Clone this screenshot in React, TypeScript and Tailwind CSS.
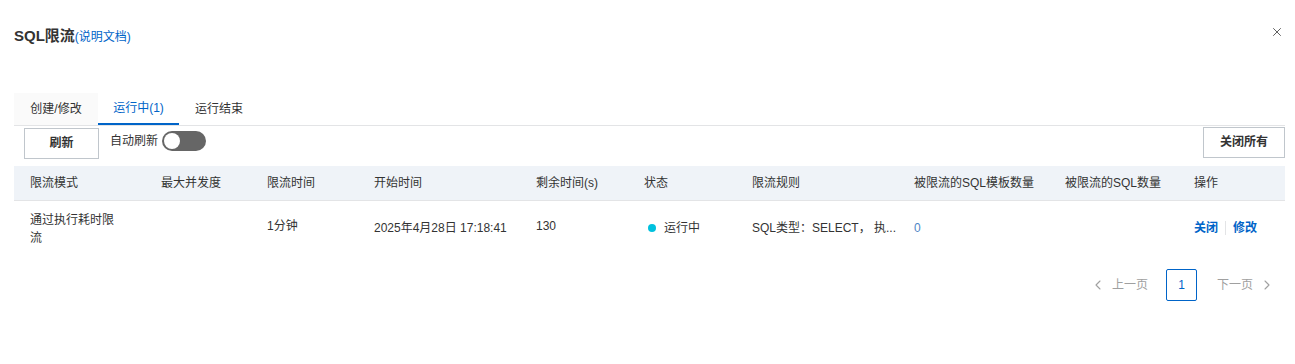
import { X, ChevronLeft, ChevronRight } from "lucide-react";

const cols = "grid grid-cols-[131px_106px_107px_162px_108px_108px_162px_151px_129px_1fr]";

const headers = [
  "限流模式",
  "最大并发度",
  "限流时间",
  "开始时间",
  "剩余时间(s)",
  "状态",
  "限流规则",
  "被限流的SQL模板数量",
  "被限流的SQL数量",
  "操作",
];

export default function App() {
  return (
    <div
      className="w-[1295px] h-[364px] bg-white text-[#333] relative"
      style={{ fontFamily: '"Liberation Sans", "Noto Sans CJK SC", sans-serif' }}
    >
      <button className="absolute right-[11px] top-[25px] text-[#555]">
        <X size={14} strokeWidth={1.6} />
      </button>

      <div className="pl-[14px] pr-[10px]">
        <div className="pt-[25px] flex items-baseline">
          <span className="text-[15px] font-semibold text-[#333]">SQL限流</span>
          <a className="text-[12px] text-[#0064c8]">(说明文档)</a>
        </div>

        {/* tabs */}
        <div className="mt-[45px] flex border-b border-[#e3e4e6] text-[12px]">
          <div className="w-[84px] h-[32px] flex items-center justify-center bg-[#fafafa]">创建/修改</div>
          <div className="w-[81px] h-[32px] flex items-center justify-center text-[#0064c8] border-b-2 border-[#0064c8] -mb-px">
            运行中(1)
          </div>
          <div className="w-[80px] h-[32px] flex items-center justify-center">运行结束</div>
        </div>

        {/* toolbar */}
        <div className="flex items-center justify-between">
          <div className="flex items-center">
            <button className="ml-[10px] w-[75px] h-[31px] border border-[#c0c6cc] text-[12px] font-bold text-[#333] mt-[2px]">
              刷新
            </button>
            <span className="ml-[11px] text-[12px] -mt-[3px]">自动刷新</span>
            <div className="ml-[4px] w-[44px] h-[20px] rounded-full bg-[#666] relative -mt-[2px]">
              <div className="absolute left-[2px] top-[2px] w-[16px] h-[16px] rounded-full bg-white" />
            </div>
          </div>
          <button className="w-[82px] h-[31px] border border-[#c0c6cc] text-[12px] font-bold text-[#333]">
            关闭所有
          </button>
        </div>

        {/* table */}
        <div className="mt-[7px] text-[12px]">
          <div className={`${cols} h-[35px] bg-[#eff3f8] items-center border-b border-[#e3e4e6]`}>
            {headers.map((h) => (
              <div key={h} className="pl-[16px] text-[#333] whitespace-nowrap">
                {h}
              </div>
            ))}
          </div>
          <div className={`${cols} items-center h-[55px]`}>
            <div className="pl-[16px] pt-[2px]">
              <div className="w-[86px] leading-[18px]">通过执行耗时限流</div>
            </div>
            <div className="pl-[16px]"></div>
            <div className="pl-[16px] -mt-[4px]">1分钟</div>
            <div className="pl-[16px] whitespace-nowrap">2025年4月28日 17:18:41</div>
            <div className="pl-[16px] -mt-[4px]">130</div>
            <div className="pl-[20px] flex items-center">
              <span className="w-[8px] h-[8px] rounded-full bg-[#00c1de] mr-[8px]" />
              运行中
            </div>
            <div className="pl-[16px] whitespace-nowrap">SQL类型：SELECT， 执...</div>
            <div className="pl-[16px] text-[#4f86c6]">0</div>
            <div className="pl-[16px]"></div>
            <div className="pl-[16px] flex items-center font-bold text-[#0064c8]">
              <span>关闭</span>
              <span className="mx-[7px] w-px h-[14px] bg-[#e3e4e6]" />
              <span>修改</span>
            </div>
          </div>
        </div>

        {/* pagination */}
        <div className="flex justify-end items-center mt-[13px] pr-[10px] text-[12px]">
          <div className="flex items-center text-[#a0a0a0]">
            <ChevronLeft size={16} strokeWidth={1.6} />
            <span className="ml-[6px]">上一页</span>
          </div>
          <div className="ml-[18px] w-[31px] h-[32px] border border-[#0064c8] rounded-[2px] flex items-center justify-center text-[#0064c8]">
            1
          </div>
          <div className="ml-[20px] flex items-center text-[#a0a0a0]">
            <span className="mr-[6px]">下一页</span>
            <ChevronRight size={16} strokeWidth={1.6} />
          </div>
        </div>
      </div>
    </div>
  );
}
